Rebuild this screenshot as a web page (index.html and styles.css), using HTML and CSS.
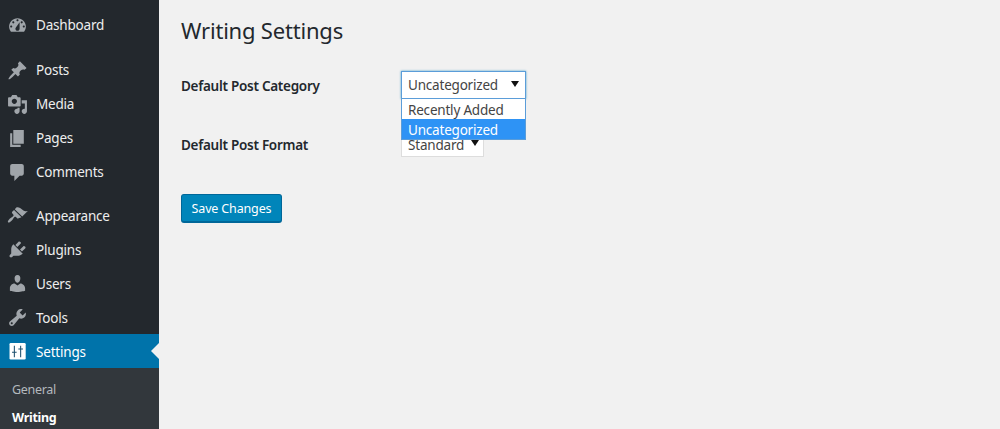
FILE: index.html
```html
<!DOCTYPE html>
<html lang="en">
<head>
<meta charset="utf-8">
<title>Writing Settings</title>
<link rel="stylesheet" href="styles.css">
</head>
<body>
<div class="shell">
  <nav class="sidebar">
    <ul class="menu">
      <li class="item"><svg class="icon" viewBox="0 0 20 20"><path fill-rule="evenodd" d="M3.76 16h12.48c1.1-1.37 1.76-3.11 1.76-5 0-4.42-3.58-8-8-8s-8 3.58-8 8c0 1.89.66 3.63 1.76 5zM10 4c.55 0 1 .45 1 1s-.45 1-1 1-1-.45-1-1 .45-1 1-1zM6 6c.55 0 1 .45 1 1s-.45 1-1 1-1-.45-1-1 .45-1 1-1zm8 0c.55 0 1 .45 1 1s-.45 1-1 1-1-.45-1-1 .45-1 1-1zm-5.37 5.55L12 7v6c0 1.1-.9 2-2 2s-2-.9-2-2c0-.57.24-1.08.63-1.45zM4 10c.55 0 1 .45 1 1s-.45 1-1 1-1-.45-1-1 .45-1 1-1zm12 0c.55 0 1 .45 1 1s-.45 1-1 1-1-.45-1-1 .45-1 1-1z"/></svg><span>Dashboard</span></li>
      <li class="item gap-a"><svg class="icon" viewBox="0 0 20 20"><path d="M10.44 3.02l1.82-1.82 6.36 6.35-1.83 1.82c-1.05-.68-2.48-.57-3.41.36l-.75.75c-.92.93-1.04 2.35-.35 3.41l-1.83 1.82-2.41-2.41-2.8 2.79c-.42.42-3.38 2.71-3.8 2.29s1.86-3.39 2.28-3.81l2.79-2.79L4.1 9.36l1.83-1.82c1.05.69 2.48.57 3.4-.36l.75-.75c.93-.92 1.05-2.35.36-3.41z"/></svg><span>Posts</span></li>
      <li class="item"><svg class="icon" viewBox="0 0 20 20"><path fill-rule="evenodd" d="M13 11V4c0-.55-.45-1-1-1h-1.67L9 1H5L3.67 3H2c-.55 0-1 .45-1 1v7c0 .55.45 1 1 1h10c.55 0 1-.45 1-1zM7 4.5c1.38 0 2.5 1.12 2.5 2.5S8.38 9.5 7 9.5 4.5 8.38 4.5 7 5.62 4.5 7 4.5zM14 6h5v10.5c0 1.38-1.12 2.5-2.5 2.5S14 17.88 14 16.5s1.12-2.5 2.5-2.5c.17 0 .34.02.5.05V9h-3V6zm-4 8.05V13h2v3.5c0 1.38-1.12 2.5-2.5 2.5S7 17.88 7 16.5 8.12 14 9.5 14c.17 0 .34.02.5.05z"/></svg><span>Media</span></li>
      <li class="item"><svg class="icon" viewBox="0 0 20 20"><path d="M6 15V2h10v13H6zm-1 1h8v2H3V5h2v11z"/></svg><span>Pages</span></li>
      <li class="item"><svg class="icon" viewBox="0 0 20 20"><path d="M5 2h9c1.1 0 2 .9 2 2v7c0 1.1-.9 2-2 2h-2l-5 5v-5H5c-1.1 0-2-.9-2-2V4c0-1.1.9-2 2-2z"/></svg><span>Comments</span></li>
      <li class="item gap-b"><svg class="icon" viewBox="0 0 20 20"><path d="M14.48 11.06L7.41 3.99l1.5-1.5c.5-.56 2.3-.47 3.51.32 1.21.8 1.43 1.28 2.91 2.1 1.18.64 2.45 1.26 4.45.85zm-.71.71L6.7 4.7 4.93 6.47c-.39.39-.39 1.02 0 1.41l1.06 1.06c.39.39.39 1.03 0 1.42-.6.6-1.43 1.11-2.21 1.69-.35.26-.7.53-1.01.84-1.43 1.43-2.42 2.95-1.77 3.6.66.66 2.17-.34 3.6-1.77.31-.31.58-.66.84-1.01.58-.78 1.09-1.61 1.69-2.21.39-.39 1.03-.39 1.42 0l1.06 1.06c.39.39 1.02.39 1.41 0z"/></svg><span>Appearance</span></li>
      <li class="item low"><svg class="icon" viewBox="0 0 20 20"><path d="M13.11 4.36L9.87 7.6 8 5.73l3.24-3.24c.35-.34 1.05-.2 1.56.32.52.51.66 1.21.31 1.55zm-8 1.77l.91-1.12 9.01 9.01-1.19.84c-.71.71-2.63 1.16-3.82 1.16H6.14L4.9 17.26c-.59.59-1.54.59-2.12 0-.59-.58-.59-1.53 0-2.12l1.24-1.24v-3.88c0-1.13.4-3.19 1.09-3.89zm7.26 3.97l3.24-3.24c.34-.35 1.04-.21 1.55.31.52.51.66 1.21.31 1.55l-3.24 3.25z"/></svg><span>Plugins</span></li>
      <li class="item low"><svg class="icon" viewBox="0 0 20 20"><path d="M10 9.25c-2.27 0-2.73-3.44-2.73-3.44C7 4.02 7.82 2 9.97 2c2.16 0 2.98 2.02 2.71 3.81 0 0-.41 3.44-2.68 3.44zm0 2.57L12.72 10c2.39 0 4.52 2.33 4.52 4.53v2.49s-3.65 1.13-7.24 1.13c-3.65 0-7.24-1.13-7.24-1.13v-2.49c0-2.25 1.94-4.48 4.47-4.48z"/></svg><span>Users</span></li>
      <li class="item low"><svg class="icon" viewBox="0 0 20 20"><path fill-rule="evenodd" d="M16.68 9.77c-1.34 1.34-3.3 1.67-4.95.99l-5.41 6.52c-.99.99-2.59.99-3.58 0s-.99-2.59 0-3.57l6.52-5.42c-.68-1.65-.35-3.61.99-4.95 1.28-1.28 3.12-1.62 4.72-1.06l-2.89 2.89 2.82 2.82 2.86-2.87c.53 1.58.18 3.39-1.08 4.65zM3.81 16.21c.4.39 1.04.39 1.43 0 .4-.4.4-1.04 0-1.43-.39-.4-1.03-.4-1.43 0-.39.39-.39 1.03 0 1.43z"/></svg><span>Tools</span></li>
      <li class="item low current"><svg class="icon" viewBox="0 0 20 20"><rect x="2.4" y="2" width="15.4" height="15.6" rx="1.2" class="gear-box"/><path class="gear-line" d="M7 4.5v11M4.8 10.8h4.4M13 4.5v11M10.8 7.6h4.4"/></svg><span>Settings</span></li>
    </ul>
    <ul class="submenu">
      <li>General</li>
      <li class="active">Writing</li>
    </ul>
  </nav>
  <main class="content">
    <h1 class="title">Writing Settings</h1>
    <div class="rows">
      <div class="row first">
        <div class="label">Default Post Category</div>
        <div class="select-wrap">
          <div class="select focus"><span>Uncategorized</span><i class="caret"></i></div>
          <ul class="options">
            <li>Recently Added</li>
            <li class="selected">Uncategorized</li>
          </ul>
        </div>
      </div>
      <div class="row second">
        <div class="label">Default Post Format</div>
        <div class="select small"><span>Standard</span><i class="caret"></i></div>
      </div>
    </div>
    <button class="save" type="button">Save Changes</button>
  </main>
</div>
</body>
</html>
```

FILE: styles.css
```css
* { box-sizing: border-box; }
html, body { margin: 0; padding: 0; height: 100%; overflow: hidden; }
body { background: #f1f1f1; color: #23282d; font-family: "Noto Sans", "Open Sans", sans-serif; font-size: 14px; }
ul { list-style: none; margin: 0; padding: 0; }

.shell { display: flex; height: 429px; }

.sidebar { width: 159px; flex: none; background: #23282d; padding-top: 8px; overflow: hidden; }
.item { height: 34px; display: flex; align-items: center; gap: 8px; padding-left: 7px; color: #eee; font-size: 13.5px; letter-spacing: -0.2px; position: relative; }
.gap-a { margin-top: 11px; }
.gap-b { margin-top: 9px; }
.gap-b span, .low span { padding-top: 2px; }
.icon { width: 21px; height: 21px; flex: none; fill: #a0a5aa; }
.current { background: #0073aa; color: #fff; }
.gear-box { fill: #fff; }
.gear-line { fill: none; stroke: #1c4f6e; stroke-width: 1; }
.current::after { content: ""; position: absolute; right: 0; top: 9px; border: 8px solid transparent; border-left-width: 0; border-right-color: #f1f1f1; }

.submenu { background: #32373c; padding-top: 12px; height: 70px; font-size: 12.5px; }
.submenu li { height: 28px; line-height: 20px; padding-left: 12px; color: #b4b9be; letter-spacing: -0.3px; }
.submenu .active { color: #fff; font-weight: 700; }

.content { flex: 1; padding: 0 0 0 22px; }
.title { margin: 0; padding-top: 14px; font-size: 22px; line-height: 32px; font-weight: 400; color: #23282d; letter-spacing: -0.2px; }

.rows { display: flex; flex-direction: column; margin-top: 1px; }
.row { display: flex; align-items: flex-start; }
.first { margin-top: 24px; height: 60px; }
.first .label { padding-top: 1px; }
.label { width: 220px; flex: none; font-weight: 600; font-size: 13.5px; line-height: 28px; color: #23282d; letter-spacing: -0.27px; }
.select-wrap { position: relative; z-index: 1; }
.select { display: flex; align-items: center; justify-content: space-between; height: 28px; background: #fff; border: 1px solid #ddd; padding: 0 6px 0 6px; font-size: 13.5px; color: #444; letter-spacing: -0.2px; }
.select.focus { width: 125px; border-color: #5b9dd9; box-shadow: 0 0 2px rgba(30,140,190,.8); }
.select.small { width: 83px; height: 26px; padding: 2px 4px 0 6px; border-top: 0; }
.caret { width: 0; height: 0; border: 4px solid transparent; border-top: 6px solid #111; border-bottom: 0; margin-bottom: 3px; }
.options { position: absolute; left: 0; top: 28px; width: 125px; background: #fff; border: 1px solid #5b9dd9; border-top: 0; font-size: 13.5px; color: #444; letter-spacing: -0.2px; }
.options li { height: 20px; line-height: 22px; padding-left: 6px; }
.options .selected { background: #2e93f5; color: #fff; }

.save { display: block; margin-top: 35px; width: 101px; height: 29px; padding: 0; background: #0085ba; border: 1px solid #006799; border-bottom-width: 2px; border-radius: 3px; color: #fff; font-family: inherit; font-size: 12.5px; letter-spacing: -0.15px; }
```
